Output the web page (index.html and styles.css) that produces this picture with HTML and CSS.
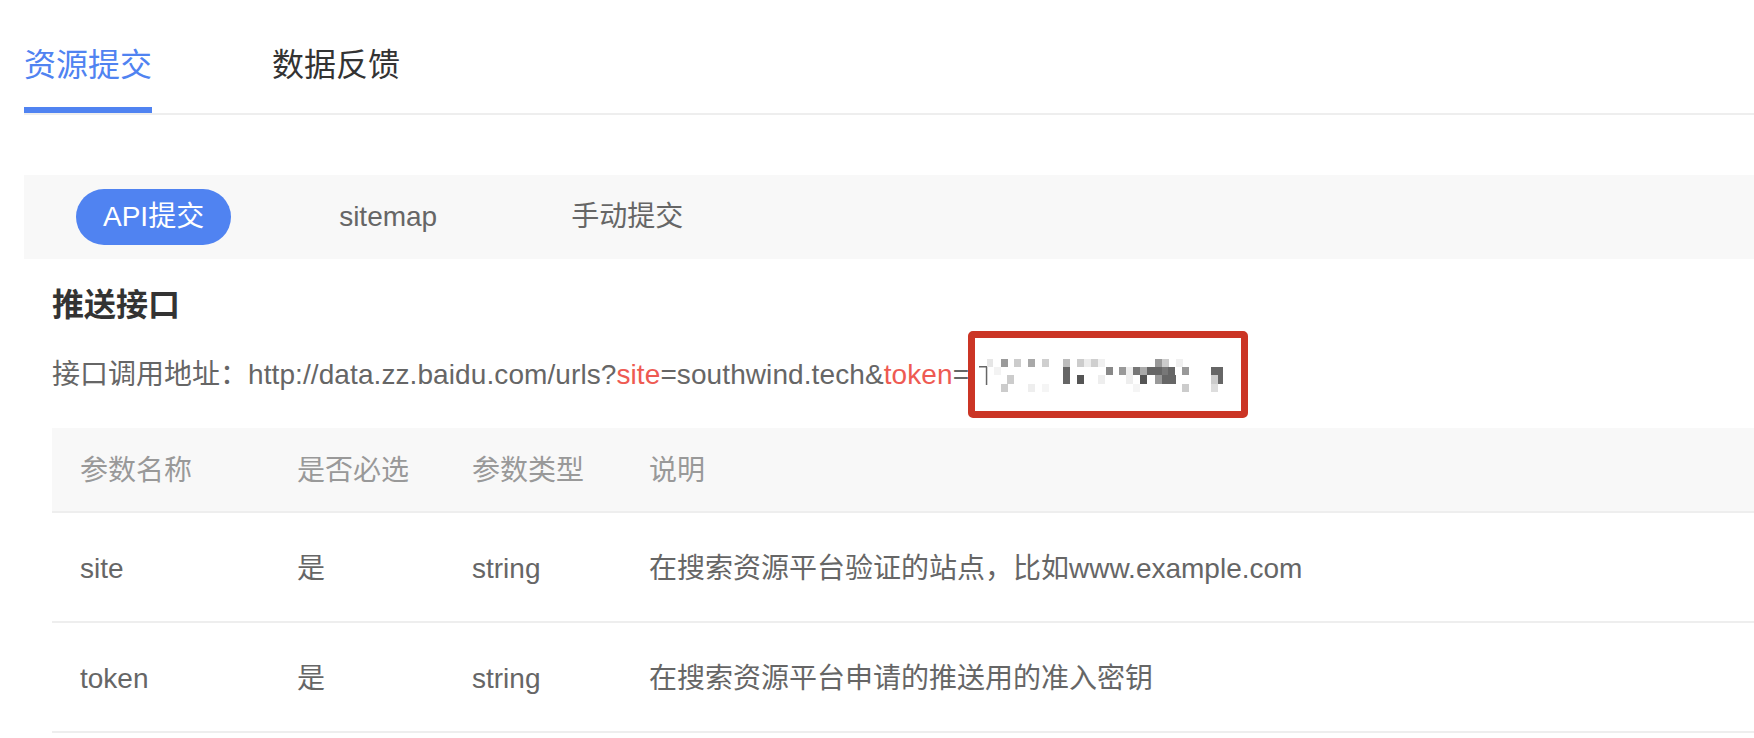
FILE: index.html
```html
<!DOCTYPE html>
<html lang="zh-CN">
<head>
<meta charset="utf-8">
<title>资源提交</title>
<link rel="stylesheet" href="styles.css">
</head>
<body>
<div class="page">
  <nav class="tabs">
    <div class="tab tab-active">资源提交</div>
    <div class="tab">数据反馈</div>
  </nav>

  <div class="subtabs">
    <div class="subtab subtab-active">API提交</div>
    <div class="subtab">sitemap</div>
    <div class="subtab">手动提交</div>
  </div>

  <section class="content">
    <h2 class="heading">推送接口</h2>
    <p class="address">接口调用地址：<span class="url">http://data.zz.baidu.com/urls?<span class="param">site</span>=southwind.tech&amp;<span class="param">token</span>=</span><span class="token"><svg class="mosaic" width="256" height="40" viewBox="0 0 256 40" xmlns="http://www.w3.org/2000/svg">
      <rect x="10" y="11" width="8" height="1.5" fill="#666"/>
      <rect x="16.8" y="11" width="1.5" height="19" fill="#666"/>
      <rect x="18" y="4" width="6" height="8" fill="#e6e6e6"/>
      <rect x="32" y="4" width="7" height="8" fill="#9a9a9a"/>
      <rect x="45" y="4" width="7" height="8" fill="#cccccc"/>
      <rect x="59" y="4" width="7" height="8" fill="#a8a8a8"/>
      <rect x="73" y="4" width="7" height="8" fill="#cfcfcf"/>
      <rect x="94" y="4" width="7" height="8" fill="#bdbdbd"/>
      <rect x="108" y="4" width="7" height="8" fill="#cccccc"/>
      <rect x="115" y="4" width="7" height="8" fill="#ececec"/>
      <rect x="122" y="4" width="7" height="8" fill="#cfcfcf"/>
      <rect x="129" y="4" width="7" height="8" fill="#f0f0f0"/>
      <rect x="186" y="4" width="7" height="8" fill="#999999"/>
      <rect x="193" y="4" width="7" height="8" fill="#cccccc"/>
      <rect x="207" y="4" width="7" height="8" fill="#f0f0f0"/>
      <rect x="25" y="12" width="7" height="8" fill="#f3f3f3"/>
      <rect x="94" y="12" width="7" height="8" fill="#666666"/>
      <rect x="137" y="12" width="7" height="8" fill="#888888"/>
      <rect x="150" y="12" width="7" height="8" fill="#999999"/>
      <rect x="157" y="12" width="7" height="8" fill="#eeeeee"/>
      <rect x="164" y="12" width="7" height="8" fill="#777777"/>
      <rect x="171" y="12" width="7" height="8" fill="#aaaaaa"/>
      <rect x="178" y="12" width="8" height="8" fill="#666666"/>
      <rect x="186" y="12" width="7" height="8" fill="#666666"/>
      <rect x="193" y="12" width="6" height="8" fill="#777777"/>
      <rect x="199" y="12" width="7" height="8" fill="#666666"/>
      <rect x="213" y="12" width="7" height="8" fill="#999999"/>
      <rect x="242" y="12" width="12" height="8" fill="#666666"/>
      <rect x="38" y="20" width="7" height="9" fill="#cccccc"/>
      <rect x="94" y="20" width="7" height="9" fill="#666666"/>
      <rect x="108" y="20" width="7" height="9" fill="#555555"/>
      <rect x="129" y="20" width="7" height="9" fill="#eeeeee"/>
      <rect x="157" y="20" width="7" height="9" fill="#eeeeee"/>
      <rect x="171" y="20" width="7" height="9" fill="#555555"/>
      <rect x="186" y="20" width="7" height="9" fill="#999999"/>
      <rect x="193" y="20" width="14" height="9" fill="#666666"/>
      <rect x="242" y="20" width="7" height="9" fill="#cccccc"/>
      <rect x="249" y="20" width="5" height="9" fill="#666666"/>
      <rect x="32" y="29" width="7" height="8" fill="#cccccc"/>
      <rect x="59" y="29" width="7" height="8" fill="#eeeeee"/>
      <rect x="73" y="29" width="7" height="8" fill="#f5f5f5"/>
      <rect x="164" y="29" width="7" height="8" fill="#f5f5f5"/>
      <rect x="213" y="29" width="7" height="8" fill="#cccccc"/>
      <rect x="242" y="29" width="7" height="8" fill="#dddddd"/>
    </svg></span></p>

    <table class="params">
      <thead>
        <tr>
          <th class="col-name">参数名称</th>
          <th class="col-req">是否必选</th>
          <th class="col-type">参数类型</th>
          <th>说明</th>
        </tr>
      </thead>
      <tbody>
        <tr>
          <td>site</td>
          <td>是</td>
          <td>string</td>
          <td>在搜索资源平台验证的站点，比如www.example.com</td>
        </tr>
        <tr>
          <td>token</td>
          <td>是</td>
          <td>string</td>
          <td>在搜索资源平台申请的推送用的准入密钥</td>
        </tr>
      </tbody>
    </table>
  </section>
</div>
</body>
</html>
```

FILE: styles.css
```css
*,
*::before,
*::after {
  box-sizing: border-box;
}

html, body {
  margin: 0;
  padding: 0;
  background: #ffffff;
}

body {
  font-family: "Liberation Sans", "Noto Sans CJK SC", sans-serif;
  font-size: 28px;
  color: #666666;
  overflow: hidden;
}

.page {
  padding-left: 24px;
}

/* top tabs */
.tabs {
  display: flex;
  gap: 120px;
  border-bottom: 2px solid #eeeeee;
}

.tab {
  font-size: 32px;
  line-height: 44px;
  padding-top: 43px;
  padding-bottom: 20px;
  border-bottom: 6px solid transparent;
  color: #333333;
}

.tab-active {
  color: #5083f1;
  border-bottom-color: #5083f1;
}

/* sub tabs */
.subtabs {
  margin-top: 60px;
  background: #f8f8f8;
  display: flex;
  align-items: center;
  gap: 82px;
  padding: 14px 0 14px 52px;
}

.subtab {
  height: 56px;
  line-height: 56px;
  padding: 0 26px;
  border-radius: 28px;
  color: #666666;
}

.subtab-active {
  background: #5083f1;
  color: #ffffff;
  padding: 0 27px;
}

/* content */
.content {
  padding-left: 28px;
}

.heading {
  margin: 24px 0 0;
  font-size: 32px;
  line-height: 44px;
  font-weight: bold;
  color: #333333;
}

.address {
  margin: 28px 0 0;
  line-height: 40px;
  white-space: nowrap;
  color: #666666;
}

.url {
  letter-spacing: 0.09px;
}

.param {
  color: #ee5a52;
}

.token {
  position: relative;
  display: inline-block;
  vertical-align: top;
  height: 40px;
}

.mosaic {
  display: block;
}

.token::after {
  content: "";
  position: absolute;
  left: -1px;
  top: -24px;
  width: 280px;
  height: 87px;
  border: 7px solid #cb3525;
  border-radius: 5px;
}

/* table */
.params {
  margin-top: 33px;
  width: 100%;
  border-collapse: separate;
  border-spacing: 0;
}

.params th,
.params td {
  text-align: left;
  padding: 0 28px;
  border-bottom: 2px solid #eeeeee;
  white-space: nowrap;
}

.params th {
  background: #f8f8f8;
  font-weight: normal;
  color: #999999;
  line-height: 81px;
  padding-top: 2px;
}

.params td {
  line-height: 105px;
  padding-top: 3px;
  color: #666666;
}

.col-name {
  width: 217px;
}

.col-req {
  width: 175px;
}

.col-type {
  width: 177px;
}
```
